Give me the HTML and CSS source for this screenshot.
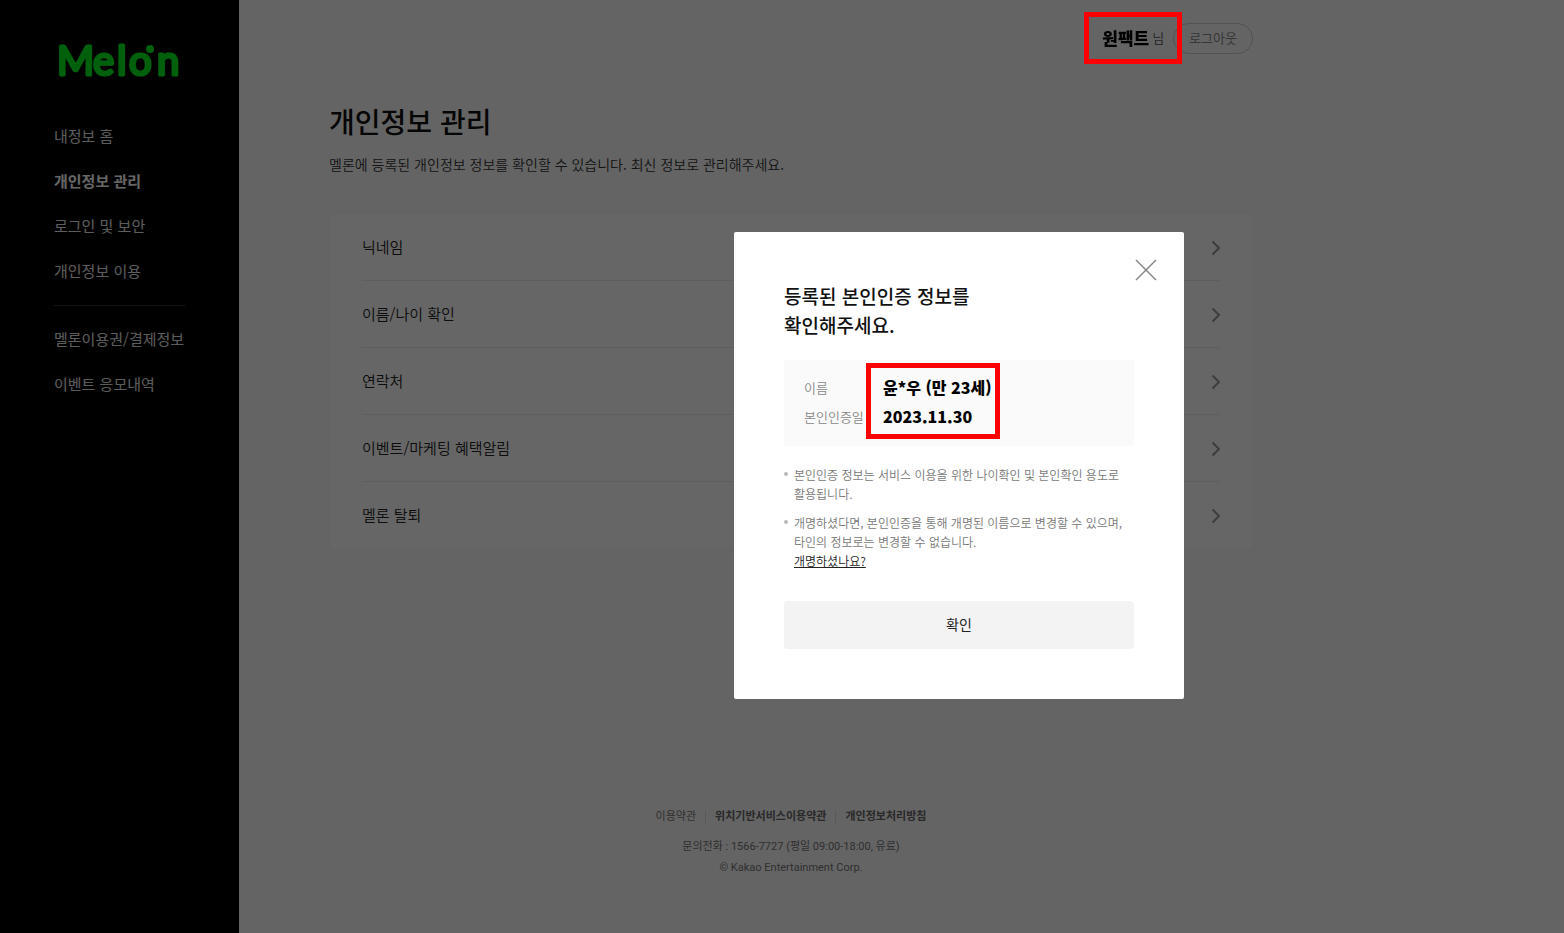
FILE: index.html
```
<!DOCTYPE html>
<html lang="ko">
<head>
  <meta charset="UTF-8">
  <meta name="viewport" content="width=device-width, initial-scale=1.0">
  <title>개인정보 관리</title>
  <link rel="stylesheet" href="styles.css">
</head>
<body>
  <div class="wrapper">
    <aside class="sidebar">
      <a class="logo" href="#" aria-label="Melon">
        <svg width="130" height="54" viewBox="0 0 130 54">
          <text class="logo-text" x="3 39 63 75 103" y="42">Melon</text>
          <circle cx="96" cy="16" r="4"/>
        </svg>
      </a>
      <nav class="menu">
        <a href="#">내정보 홈</a>
        <a class="active" href="#">개인정보 관리</a>
        <a href="#">로그인 및 보안</a>
        <a href="#">개인정보 이용</a>
        <hr>
        <a href="#">멜론이용권/결제정보</a>
        <a href="#">이벤트 응모내역</a>
      </nav>
    </aside>
    <div class="content">
      <header class="header">
        <div class="user">
          <strong class="user-name">원팩트</strong>
          <span class="suffix">님</span>
          <span class="mark mark-user"></span>
        </div>
        <button class="logout" type="button">로그아웃</button>
      </header>
      <main>
        <h1>개인정보 관리</h1>
        <p class="desc">멜론에 등록된 개인정보 정보를 확인할 수 있습니다. 최신 정보로 관리해주세요.</p>
        <ul class="list">
          <li><a href="#">닉네임 <svg width="9" height="16" viewBox="0 0 9 16"><path d="M1.500 1.500L8 8L1.500 14.500"/></svg></a></li>
          <li><a href="#">이름/나이 확인 <svg width="9" height="16" viewBox="0 0 9 16"><path d="M1.500 1.500L8 8L1.500 14.500"/></svg></a></li>
          <li><a href="#">연락처 <svg width="9" height="16" viewBox="0 0 9 16"><path d="M1.500 1.500L8 8L1.500 14.500"/></svg></a></li>
          <li><a href="#">이벤트/마케팅 혜택알림 <svg width="9" height="16" viewBox="0 0 9 16"><path d="M1.500 1.500L8 8L1.500 14.500"/></svg></a></li>
          <li><a href="#">멜론 탈퇴 <svg width="9" height="16" viewBox="0 0 9 16"><path d="M1.500 1.500L8 8L1.500 14.500"/></svg></a></li>
        </ul>
      </main>
      <footer class="footer">
        <div class="footer-links">
          <a href="#">이용약관</a>
          <a class="bold" href="#">위치기반서비스이용약관</a>
          <a class="bold" href="#">개인정보처리방침</a>
        </div>
        <p>문의전화 : 1566-7727 (평일 09:00-18:00, 유료)</p>
        <p>© Kakao Entertainment Corp.</p>
      </footer>
    </div>
  </div>

  <!-- identity check popup -->
  <div class="backdrop">
    <div class="popup" role="dialog" aria-modal="true" aria-labelledby="popup-title">
      <button class="close" type="button" aria-label="닫기">
        <svg width="22" height="22" viewBox="0 0 22 22"><path d="M1 1L21 21M21 1L1 21"/></svg>
      </button>
      <h2 id="popup-title">등록된 본인인증 정보를<br>확인해주세요.</h2>
      <div class="info">
        <dl>
          <dt>이름</dt>
          <dd>윤*우 (만 23세)</dd>
          <dt>본인인증일</dt>
          <dd>2023.11.30</dd>
        </dl>
        <span class="mark mark-info"></span>
      </div>
      <ul class="notes">
        <li>본인인증 정보는 서비스 이용을 위한 나이확인 및 본인확인 용도로 활용됩니다.</li>
        <li>개명하셨다면, 본인인증을 통해 개명된 이름으로 변경할 수 있으며,<br>타인의 정보로는 변경할 수 없습니다.<br><a href="#">개명하셨나요?</a></li>
      </ul>
      <button class="confirm" type="button">확인</button>
    </div>
  </div>
</body>
</html>
```
FILE: styles.css
```
/* Reset and base styles */
* {
  padding: 0;
  margin: 0;
  box-sizing: border-box;
}
body {
  font-family: "Noto Sans CJK KR", sans-serif;
  font-size: 15px;
  color: #222;
  background: #fafafa;
  word-break: keep-all;
}
a {
  color: inherit;
  text-decoration: none;
}
ul {
  list-style: none;
}
button {
  font-family: inherit;
  border: none;
  cursor: pointer;
}
svg {
  display: block;
}
.wrapper {
  display: flex;
  min-height: 100vh;
}

/* Sidebar */
.sidebar {
  flex: none;
  width: 239px;
  padding: 33px 54px;
  background: #000;
}
.logo svg {
  fill: #00f01e;
}
.logo-text {
  font-family: Lato, sans-serif;
  font-size: 40px;
  font-weight: 400;
  stroke: #00f01e;
  stroke-width: 3px;
  stroke-linejoin: round;
}
.menu {
  margin-top: 26px;
}
.menu a {
  display: block;
  line-height: 45px;
  color: #e6e6e6;
  white-space: nowrap;
}
.menu a.active {
  font-weight: 700;
  color: #fff;
}
.menu hr {
  margin: 12px 0 10px;
  border: none;
  border-top: 1px solid #333;
}

/* Content */
.content {
  flex: 1;
  display: flex;
  flex-direction: column;
  max-width: 1014px;
  padding: 23px 0 55px 90px;
}
.header {
  display: flex;
  justify-content: flex-end;
  align-items: center;
  gap: 9px;
}
.user {
  position: relative;
  display: flex;
  align-items: center;
  gap: 3px;
  padding-bottom: 2px;
}
.user-name {
  position: relative;
  z-index: 11;
  font-size: 17px;
  font-weight: 900;
  line-height: 24px;
  color: #000;
}
.suffix {
  font-size: 13px;
  color: #666;
}
.logout {
  height: 31px;
  padding: 0 15px 2px;
  border: 1px solid #ccc;
  border-radius: 16px;
  background: transparent;
  font-size: 13px;
  color: #888;
}
h1 {
  margin-top: 47px;
  font-size: 28px;
  font-weight: 500;
  line-height: 40px;
  color: #111;
}
.desc {
  margin-top: 11px;
  font-size: 14px;
  font-weight: 350;
  line-height: 24px;
  color: #333;
}
.list {
  margin-top: 37px;
  padding: 0 32px;
  border: 1px solid #f7f7f7;
  border-radius: 4px;
  background: #fff;
}
.list li + li {
  border-top: 1px solid #ebebeb;
}
.list a {
  display: flex;
  justify-content: space-between;
  align-items: center;
  height: 66px;
  padding-bottom: 2px;
  font-weight: 350;
}
.list svg {
  margin-top: 4px;
  fill: none;
  stroke: #999;
  stroke-width: 2;
}

/* Footer */
.footer {
  margin-top: auto;
  font-family: Roboto, "Noto Sans CJK KR", sans-serif;
  font-size: 11px;
  line-height: 21px;
  text-align: center;
  color: #777;
}
.footer-links {
  display: flex;
  justify-content: center;
  align-items: center;
  margin-bottom: 13px;
}
.footer-links a {
  line-height: 12px;
}
.footer-links a + a {
  margin-left: 9px;
  padding-left: 9px;
  border-left: 1px solid #ddd;
}
.footer-links .bold {
  font-weight: 700;
  color: #666;
}

/* Popup */
.backdrop {
  position: fixed;
  inset: 0;
  z-index: 10;
  display: flex;
  align-items: center;
  justify-content: center;
  padding: 0 0 2px 354px;
  background: rgba(0, 0, 0, 0.6);
}
.popup {
  position: relative;
  width: 450px;
  padding: 49px 50px 50px;
  border-radius: 2px;
  background: #fff;
}
.close {
  position: absolute;
  top: 27px;
  right: 27px;
  background: transparent;
}
.close svg {
  fill: none;
  stroke: #888;
  stroke-width: 1.5;
}
h2 {
  font-size: 19px;
  font-weight: 500;
  line-height: 29px;
  color: #111;
}
.info {
  position: relative;
  margin-top: 21px;
  padding: 13px 20px 15px;
  background: #fafafa;
}
.info dl {
  display: grid;
  grid-template-columns: 79px 1fr;
  line-height: 29px;
}
.info dt {
  font-size: 13px;
  font-weight: 350;
  color: #888;
}
.info dd {
  font-size: 16px;
  font-weight: 900;
  color: #000;
}
.notes {
  margin-top: 19px;
  font-size: 12px;
  font-weight: 350;
  line-height: 19px;
  color: #777;
}
.notes li {
  position: relative;
  padding-left: 10px;
}
.notes li + li {
  margin-top: 10px;
}
.notes li::before {
  content: "";
  position: absolute;
  top: 7px;
  left: 0;
  width: 4px;
  height: 4px;
  border-radius: 50%;
  background: #bbb;
}
.notes a {
  color: #222;
  text-decoration: underline;
}
.confirm {
  width: 100%;
  height: 48px;
  margin-top: 31px;
  padding-bottom: 2px;
  border-radius: 4px;
  background: #f3f3f3;
  font-size: 14px;
  color: #222;
}

/* Red highlight boxes */
.mark {
  position: absolute;
  border: 5px solid #f00;
  pointer-events: none;
}
.mark-user {
  z-index: 12;
  top: -14px;
  right: -18px;
  width: 98px;
  height: 52px;
}
.mark-info {
  top: 3px;
  left: 82px;
  width: 134px;
  height: 76px;
}
```
